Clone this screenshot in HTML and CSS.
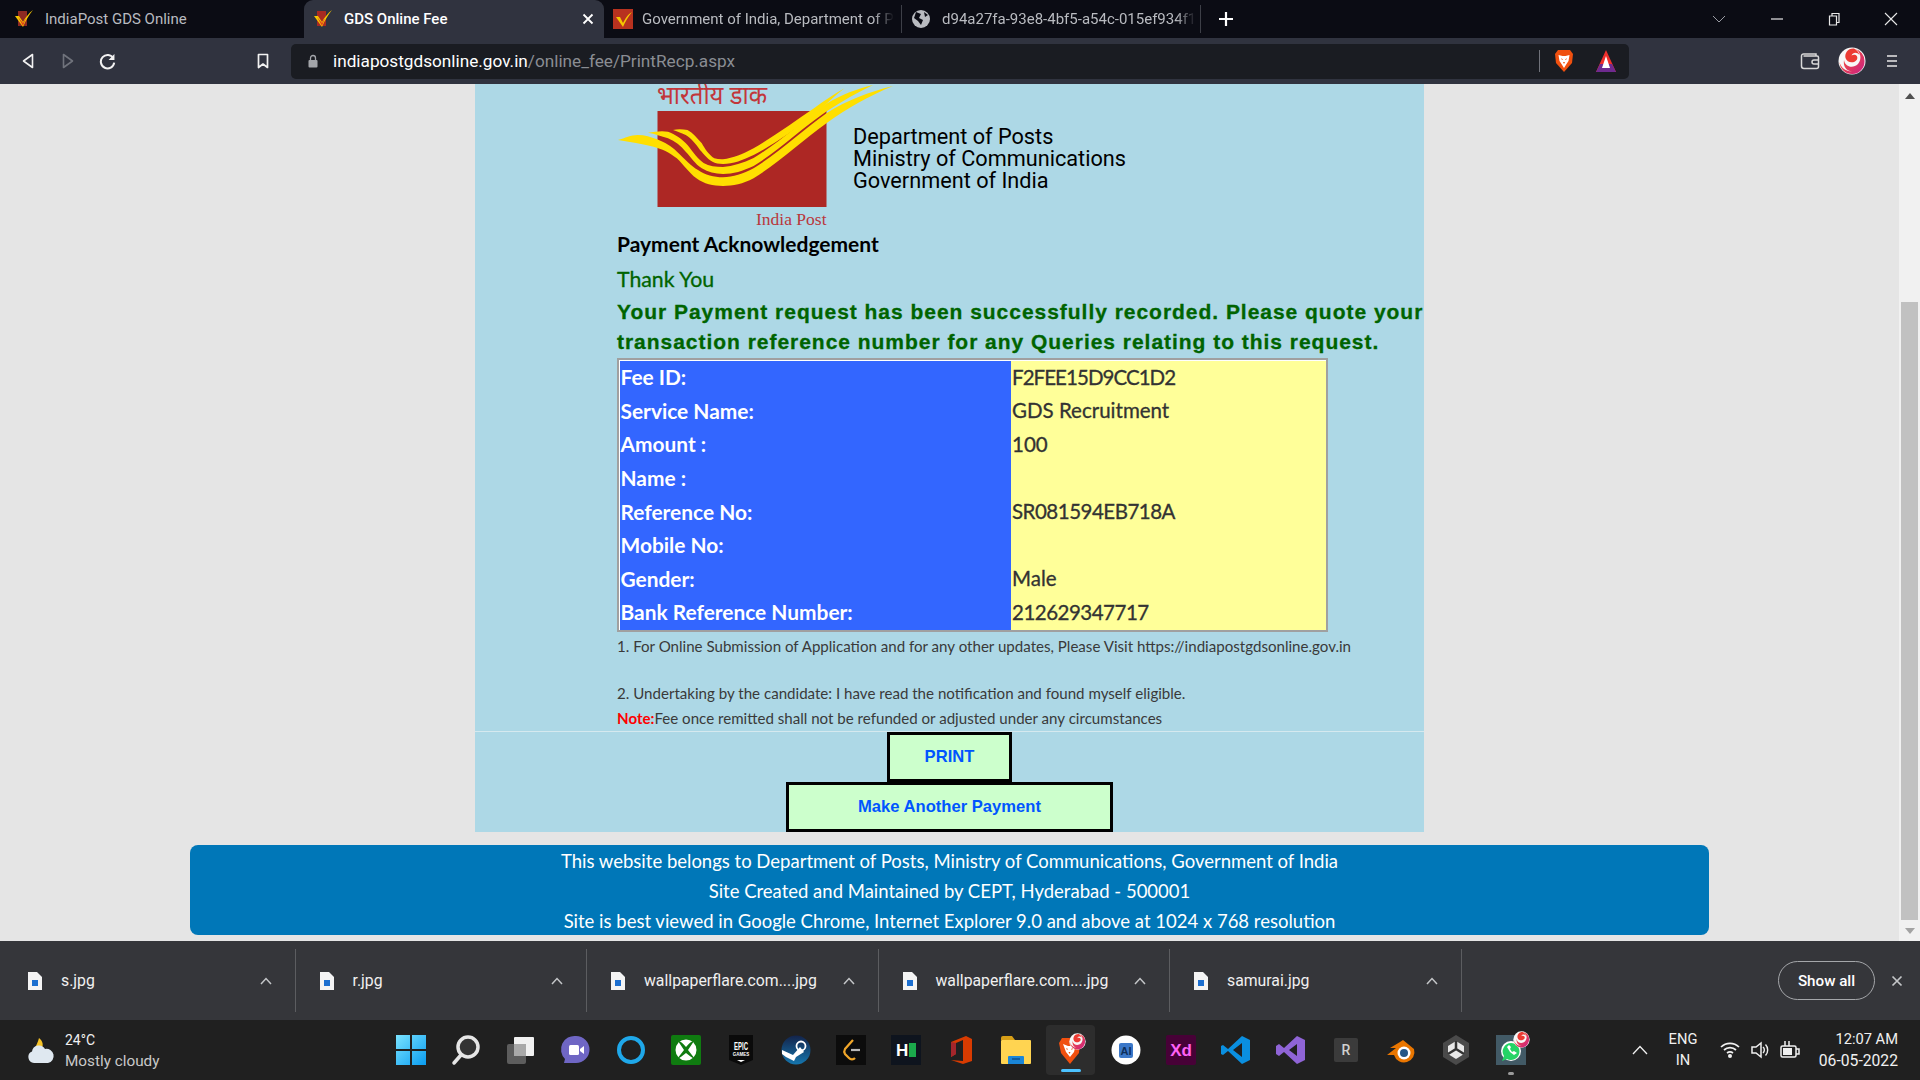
FILE: index.html
```html
<!DOCTYPE html>
<html lang="en">
<head>
<meta charset="utf-8">
<title>GDS Online Fee</title>
<link rel="stylesheet" href="styles.css">
</head>
<body>
<svg class="defs" width="0" height="0">
  <defs>
    <linearGradient id="lolly" x1="0" y1="0" x2="1" y2="1"><stop offset="0" stop-color="#ff5a22"/><stop offset="1" stop-color="#c9208a"/></linearGradient>
    <symbol id="lollipop" viewBox="0 0 28 28">
      <circle cx="14" cy="14" r="13.500" fill="#f7f7f7"/>
      <path d="M1.500 15 A12.500 12.500 0 0 0 26.500 14 A12.500 12.500 0 0 0 17 1.800 C23 5 24 12 20 17 C15 22 7 20 6 13 C5 19 8 24 14 24.500 C8 24.500 3 21 1.500 15 Z" fill="url(#lolly)"/>
      <path d="M16 1.500 C10 1 6.500 6 7.500 11 C9 16 16 17 19 12.500 C20.500 9 17 6.500 13.500 8.500 C15 5 19 5 21.500 8 C20.500 5 19 3 16 1.500 Z" fill="#ec3b33"/>
    </symbol>
  </defs>
</svg>
<div class="tabstrip">
  <div class="tab tab-1">
    <svg class="favicon" viewBox="0 0 20 20"><rect x="4" y="2" width="9" height="15" fill="#8e2a22"/><path d="M1 7 L5 7 L9 13 C11 9 15 4 19 1 C15 6 12 11 9 18 Z" fill="#f6c700"/><path d="M4 8 L9 14 L12 9 L9 17 Z" fill="#e2401c"/></svg>
    <span class="tab-title">IndiaPost GDS Online</span>
  </div>
  <div class="tab tab-active">
    <svg class="favicon" viewBox="0 0 20 20"><rect x="4" y="2" width="9" height="15" fill="#a82a22"/><path d="M1 7 L5 7 L9 13 C11 9 15 4 19 1 C15 6 12 11 9 18 Z" fill="#f6c700"/><path d="M4 8 L9 14 L12 9 L9 17 Z" fill="#e2401c"/></svg>
    <span class="tab-title">GDS Online Fee</span>
    <svg class="tab-close" viewBox="0 0 12 12"><path d="M1.500 1.500 L10.500 10.500 M10.500 1.500 L1.500 10.500" stroke="#fff" stroke-width="1.800"/></svg>
  </div>
  <div class="tab tab-3">
    <svg class="favicon" viewBox="0 0 20 20"><rect width="20" height="20" fill="#b8321f"/><path d="M3 8 L7 8 L10 14 C12 10 15 5 19 3 C15 8 12 13 10 18 Z" fill="#f6c700"/></svg>
    <span class="tab-title fade">Government of India, Department of P</span>
  </div>
  <div class="tab tab-4">
    <svg class="favicon" viewBox="0 0 20 20"><circle cx="10" cy="10" r="9" fill="#b9bbc0"/><path d="M5 3 L10 5 L8 9 L12 11 L10 16 L7 12 L3 9 Z M13 3 L17 6 L14 8 Z" fill="#0b0c14"/></svg>
    <span class="tab-title fade">d94a27fa-93e8-4bf5-a54c-015ef934f1</span>
  </div>
  <svg class="newtab" viewBox="0 0 16 16"><path d="M8 1 V15 M1 8 H15" stroke="#fff" stroke-width="2.200"/></svg>
  <svg class="win-chevron" viewBox="0 0 14 8"><path d="M1 1 L7 7 L13 1" fill="none" stroke="#9a9ca3" stroke-width="1"/></svg>
  <div class="win-controls">
    <svg viewBox="0 0 14 14" class="win-btn"><path d="M1 7 H13" stroke="#e8e8e8" stroke-width="1.200"/></svg>
    <svg viewBox="0 0 14 14" class="win-btn"><path d="M2.500 4 H9.500 V13 H2.500 Z M5 4 V1.500 H12 V10.500 H9.500" fill="none" stroke="#e8e8e8" stroke-width="1.200"/></svg>
    <svg viewBox="0 0 14 14" class="win-btn"><path d="M1 1 L13 13 M13 1 L1 13" stroke="#e8e8e8" stroke-width="1.100"/></svg>
  </div>
</div>

<div class="toolbar">
  <div class="nav-buttons">
    <svg class="nav-icon" viewBox="0 0 12 16"><path d="M10.500 1.500 V14.500 L1.500 8 Z" fill="none" stroke="#f2f2f2" stroke-width="1.600" stroke-linejoin="round"/></svg>
    <svg class="nav-icon" viewBox="0 0 12 16"><path d="M1.500 1.500 V14.500 L10.500 8 Z" fill="none" stroke="#70737c" stroke-width="1.600" stroke-linejoin="round"/></svg>
    <svg class="nav-icon" viewBox="0 0 16 16"><path d="M13.500 5 A6.300 6.300 0 1 0 14.300 9" fill="none" stroke="#f2f2f2" stroke-width="1.900"/><path d="M14.500 1 V6.500 H9 Z" fill="#f2f2f2"/></svg>
  </div>
  <svg class="bookmark" viewBox="0 0 12 16"><path d="M1.500 1.500 H10.500 V14.500 L6 11 L1.500 14.500 Z" fill="none" stroke="#f2f2f2" stroke-width="1.700" stroke-linejoin="round"/></svg>
  <div class="urlbar">
    <svg class="lock" viewBox="0 0 10 14"><path d="M2.500 6 V4 A2.500 2.500 0 0 1 7.500 4 V6" fill="none" stroke="#a3a5aa" stroke-width="1.300"/><rect x="0.500" y="6" width="9" height="7.500" rx="1" fill="#a3a5aa"/></svg>
    <span class="url"><span class="url-host">indiapostgdsonline.gov.in</span>/online_fee/PrintRecp.aspx</span>
    <span class="url-divider"></span>
    <svg class="shield" viewBox="0 0 20 24"><path d="M4 1 H16 L19 5 L18 14 L10 23 L2 14 L1 5 Z" fill="#f0500f"/><path d="M4.500 6 L8.500 7 H11.500 L15.500 6 L14.500 12 L12.500 15 L10 19 L7.500 15 L5.500 12 Z" fill="#fff"/><path d="M7 9 L9 10.500 L8 11 Z M13 9 L11 10.500 L12 11 Z M9 13 H11 L10 15 Z" fill="#f0500f"/></svg>
    <svg class="triangle" viewBox="0 0 22 24"><path d="M11 1 L21 23 H1 Z" fill="#ef2f2c"/><path d="M1 23 L5 15 H17 L21 23 Z" fill="#6e2a8f"/><path d="M11 7 L15 19 H7 Z" fill="#fff"/></svg>
  </div>
  <div class="toolbar-right">
    <svg class="wallet" viewBox="0 0 20 18"><path d="M16 4 V2 H3.500 A2 2 0 0 0 1.500 4 V14 A2.500 2.500 0 0 0 4 16.500 H16.500 A2 2 0 0 0 18.500 14.500 V5.500 A1.500 1.500 0 0 0 17 4 H3.500" fill="none" stroke="#d8d8d8" stroke-width="1.500"/><path d="M19 8 H14 A2 2 0 0 0 14 12 H19" fill="none" stroke="#d8d8d8" stroke-width="1.500"/></svg>
    <svg class="avatar"><use href="#lollipop"/></svg>
    <svg class="menu" viewBox="0 0 14 14"><path d="M2 2 H12 M2 7 H12 M2 12 H12" stroke="#e8e8e8" stroke-width="1.700"/></svg>
  </div>
</div>

<div class="viewport">
  <main class="page">
    <section class="panel">
      <div class="panel-inner">
        <header class="brand">
          <svg class="logo" viewBox="0 0 236 146">
            <text class="logo-hindi" x="40" y="20" textLength="110" lengthAdjust="spacingAndGlyphs">भारतीय डाक</text>
            <rect x="40.500" y="27" width="169" height="96" fill="#ad2724"/>
            <path d="M1 56 C8 54 14 51 20.500 51 C28 51 34 53 40 55.300 C48 58.500 54 62 60 67.700 C68 75 74 82 81 86 C88 91 97 93.300 106 93.300 C116 93 126 90 136.600 84.300 C160 70 185 47 209.400 29.300 C230 16 252 8 276 2 C252 12 230 24 209.400 39.300 C185 57 160 80 136.600 94.300 C126 100 116 102 106 102 C96 102 87 100 79.400 94.300 C72 89 67 81 59.800 74.300 C52 68 45 65 36.600 62.700 C25 60 13 58 1 56 Z" fill="#ffdf00"/>
            <path d="M31 48.700 C38 47.500 45 46.500 51 47.700 C58 50 65 55 70.500 61 C76 68 81 75 86.600 79 C92 82 99 83 106 83 C116 82 126 79 136.600 74 C160 60 185 38 209 20 C225 10 240 5 256 1 C240 9 225 17 209 27.700 C185 44 160 68 136.600 82 C126 87 116 90 106 90 C98 90 91 88 84.800 84.300 C78 80 74 73 68.700 67.700 C64 62 58 57 51 54.300 C44 52 38 50 31 48.700 Z" fill="#ffdf00"/>
            <path d="M56 46 C60 45 65 45 70.500 46 C76 49 80 54 84.800 59.300 C88 65 92 71 97.300 74.300 C100 75 103 75.500 106 75.300 C116 74 126 70 136.600 64.300 C158 52 178 37 197 24.300 C207 17 217 10 227.600 4.300 C218 11 208 22 197 31 C178 45 158 60 136.600 71 C126 76 116 80 106 80 C102 80 98 79 95.500 77.700 C90 75 87 70 83 66 C79 60 74 54 68.700 51 C64 49 60 47 56 46 Z" fill="#ffdf00"/>
            <text class="logo-post" x="139" y="141">India Post</text>
          </svg>
          <div class="dept">Department of Posts<br>Ministry of Communications<br>Government of India</div>
        </header>
        <h1 class="ack">Payment Acknowledgement</h1>
        <p class="thanks">Thank You</p>
        <p class="recorded">Your Payment request has been successfully recorded. Please quote your<br>transaction reference number for any Queries relating to this request.</p>
        <table class="fee-table">
          <tr><th>Fee ID:</th><td class="fee-code">F2FEE15D9CC1D2</td></tr>
          <tr><th>Service Name:</th><td>GDS Recruitment</td></tr>
          <tr><th>Amount :</th><td>100</td></tr>
          <tr><th>Name :</th><td></td></tr>
          <tr><th>Reference No:</th><td class="ref-code">SR081594EB718A</td></tr>
          <tr><th>Mobile No:</th><td></td></tr>
          <tr><th>Gender:</th><td>Male</td></tr>
          <tr><th>Bank Reference Number:</th><td class="ref-code">212629347717</td></tr>
        </table>
        <div class="notes">
          <p class="note-line note-first">1. For Online Submission of Application and for any other updates, Please Visit https://indiapostgdsonline.gov.in</p>
          <p class="note-line note-second">2. Undertaking by the candidate: I have read the notification and found myself eligible.</p>
          <p class="note-line note-third"><span class="note-label">Note:</span>Fee once remitted shall not be refunded or adjusted under any circumstances</p>
        </div>
      </div>
      <hr class="rule">
      <div class="actions">
        <button class="btn btn-print">PRINT</button>
        <button class="btn btn-again">Make Another Payment</button>
      </div>
    </section>
    <footer class="site-footer">
      <div>This website belongs to Department of Posts, Ministry of Communications, Government of India</div>
      <div>Site Created and Maintained by CEPT, Hyderabad - 500001</div>
      <div>Site is best viewed in Google Chrome, Internet Explorer 9.0 and above at 1024 x 768 resolution</div>
    </footer>
  </main>
  <div class="scrollbar">
    <svg class="scroll-arrow" viewBox="0 0 10 6"><path d="M0 6 L5 0 L10 6 Z" fill="#505050"/></svg>
    <div class="scroll-thumb"></div>
    <svg class="scroll-arrow scroll-arrow-down" viewBox="0 0 10 6"><path d="M0 0 L5 6 L10 0 Z" fill="#a3a3a3"/></svg>
  </div>
</div>

<div class="shelf">
  <div class="shelf-item">
    <svg class="file" viewBox="0 0 14 18"><path d="M0 0 H9 L14 5 V18 H0 Z" fill="#f4f4f4"/><rect x="4" y="8" width="6" height="6" fill="#1c6fd0"/></svg>
    <span class="file-name">s.jpg</span>
    <svg class="caret" viewBox="0 0 12 8"><path d="M1 7 L6 1.500 L11 7" fill="none" stroke="#c4c6c8" stroke-width="1.500"/></svg>
  </div>
  <div class="shelf-item">
    <svg class="file" viewBox="0 0 14 18"><path d="M0 0 H9 L14 5 V18 H0 Z" fill="#f4f4f4"/><rect x="4" y="8" width="6" height="6" fill="#1c6fd0"/></svg>
    <span class="file-name">r.jpg</span>
    <svg class="caret" viewBox="0 0 12 8"><path d="M1 7 L6 1.500 L11 7" fill="none" stroke="#c4c6c8" stroke-width="1.500"/></svg>
  </div>
  <div class="shelf-item">
    <svg class="file" viewBox="0 0 14 18"><path d="M0 0 H9 L14 5 V18 H0 Z" fill="#f4f4f4"/><rect x="4" y="8" width="6" height="6" fill="#1c6fd0"/></svg>
    <span class="file-name">wallpaperflare.com....jpg</span>
    <svg class="caret" viewBox="0 0 12 8"><path d="M1 7 L6 1.500 L11 7" fill="none" stroke="#c4c6c8" stroke-width="1.500"/></svg>
  </div>
  <div class="shelf-item">
    <svg class="file" viewBox="0 0 14 18"><path d="M0 0 H9 L14 5 V18 H0 Z" fill="#f4f4f4"/><rect x="4" y="8" width="6" height="6" fill="#1c6fd0"/></svg>
    <span class="file-name">wallpaperflare.com....jpg</span>
    <svg class="caret" viewBox="0 0 12 8"><path d="M1 7 L6 1.500 L11 7" fill="none" stroke="#c4c6c8" stroke-width="1.500"/></svg>
  </div>
  <div class="shelf-item">
    <svg class="file" viewBox="0 0 14 18"><path d="M0 0 H9 L14 5 V18 H0 Z" fill="#f4f4f4"/><rect x="4" y="8" width="6" height="6" fill="#1c6fd0"/></svg>
    <span class="file-name">samurai.jpg</span>
    <svg class="caret" viewBox="0 0 12 8"><path d="M1 7 L6 1.500 L11 7" fill="none" stroke="#c4c6c8" stroke-width="1.500"/></svg>
  </div>
  <div class="shelf-end">
    <span class="show-all">Show all</span>
    <svg class="shelf-close" viewBox="0 0 12 12"><path d="M1.500 1.500 L10.500 10.500 M10.500 1.500 L1.500 10.500" stroke="#c4c6c8" stroke-width="1.700"/></svg>
  </div>
</div>

<div class="taskbar">
  <div class="weather">
    <svg class="weather-icon" viewBox="0 0 28 26"><path d="M12 0 C16 3 17 8 14 11 L7 12 C9 8 11 4 12 0 Z" fill="#f7c327"/><path d="M7 25 A6 6 0 0 1 5 13.500 A7 7 0 0 1 18 11 A6.500 6.500 0 0 1 21 25 Z" fill="#dfe8f0"/></svg>
    <div class="weather-text"><span class="temp">24°C</span><span class="sky">Mostly cloudy</span></div>
  </div>
  <div class="apps">
    <div class="app"><svg class="app-icon" viewBox="0 0 30 30"><defs><linearGradient id="win" x1="0" y1="0" x2="1" y2="1"><stop offset="0" stop-color="#7ae3ff"/><stop offset="1" stop-color="#0a9cf0"/></linearGradient></defs><path d="M0 0 H14 V14 H0 Z M16 0 H30 V14 H16 Z M0 16 H14 V30 H0 Z M16 16 H30 V30 H16 Z" fill="url(#win)"/></svg></div>
    <div class="app"><svg class="app-icon" viewBox="0 0 30 30"><circle cx="17" cy="12" r="10" fill="#333" stroke="#e6e6e6" stroke-width="3.500"/><path d="M10 20 L3 28" stroke="#e6e6e6" stroke-width="3.500" stroke-linecap="round"/></svg></div>
    <div class="app"><svg class="app-icon" viewBox="0 0 30 30"><rect x="1" y="9" width="19" height="20" rx="2" fill="#5d5d5d"/><rect x="8" y="2" width="20" height="19" rx="1" fill="#f1f1f1"/><rect x="8" y="9" width="12" height="12" fill="#a9a9a9"/></svg></div>
    <div class="app"><svg class="app-icon" viewBox="0 0 30 30"><path d="M15 1 A13.500 13.500 0 0 1 15 28 H3 L4 24 A13.500 13.500 0 0 1 15 1 Z" fill="#6f66c4"/><rect x="8" y="10" width="10" height="10" rx="1.500" fill="#fff"/><path d="M19 14 L23 11 V19 L19 16 Z" fill="#fff"/></svg></div>
    <div class="app"><svg class="app-icon" viewBox="0 0 30 30"><circle cx="15" cy="15" r="12" fill="none" stroke="#1fa8ea" stroke-width="4"/></svg></div>
    <div class="app"><svg class="app-icon" viewBox="0 0 30 30"><rect width="30" height="30" rx="2" fill="#0f7b10"/><circle cx="15" cy="15" r="10.500" fill="#fff"/><path d="M15 12 C12 8 9 6 7 6 L13 15 L6 24 C9 23 12 20 15 18 C18 20 21 23 24 24 L17 15 L23 6 C21 6 18 8 15 12 Z" fill="#0f7b10"/></svg></div>
    <div class="app"><svg class="app-icon" viewBox="0 0 30 30"><path d="M3 0 H27 V25 L15 30 L3 25 Z" fill="#0a0a0a"/><text class="epic-top" x="8" y="15" textLength="14" lengthAdjust="spacingAndGlyphs">EPIC</text><text class="epic-bottom" x="15" y="21" text-anchor="middle">GAMES</text><path d="M11 25 H19 L15 27 Z" fill="#fff"/></svg></div>
    <div class="app"><svg class="app-icon" viewBox="0 0 30 30"><defs><linearGradient id="steam" x1="0" y1="0" x2="0" y2="1"><stop offset="0" stop-color="#13234a"/><stop offset="1" stop-color="#1576ae"/></linearGradient></defs><circle cx="15" cy="15" r="14.500" fill="url(#steam)"/><path d="M1 15 L12 20 L19 12 L23 17 L15 22 L13 26 L5 22 L1 19 Z" fill="#fff"/><circle cx="20" cy="11" r="4.500" fill="none" stroke="#fff" stroke-width="1.800"/></svg></div>
    <div class="app"><svg class="app-icon" viewBox="0 0 30 30"><rect width="30" height="30" fill="#0c0c0c"/><path d="M17 5 L9 14 A5 5 0 0 0 9 19 L13 23 A4 4 0 0 0 19 23" fill="none" stroke="#f0a62a" stroke-width="2.200"/><path d="M15 15 H24" stroke="#b8b8b8" stroke-width="2.200"/></svg></div>
    <div class="app"><svg class="app-icon" viewBox="0 0 30 30"><rect width="30" height="30" fill="#0e141e"/><text class="hr-h" x="5" y="21">H</text><rect x="18" y="8" width="7" height="14" fill="#1ba94c"/></svg></div>
    <div class="app"><svg class="app-icon" viewBox="0 0 30 30"><path d="M20 1 L26 4 V26 L17 29 L5 25 L17 26 V5 L10 8 V19 L5 22 V7 Z" fill="#d83b01"/><path d="M5 7 L10 8 V19 L5 22 Z" fill="#a4262c"/></svg></div>
    <div class="app"><svg class="app-icon" viewBox="0 0 30 30"><path d="M0 3 A2 2 0 0 1 2 1 H11 L14 5 H0 Z" fill="#d79f17"/><rect y="5" width="30" height="24" rx="1" fill="#ffd451"/><path d="M8 21 H22 A1 1 0 0 1 23 22 V29 H7 V22 A1 1 0 0 1 8 21 Z" fill="#1a86d8"/><path d="M11 24 H19" stroke="#0f4e8c" stroke-width="1.500"/></svg></div>
    <div class="app app-active"><svg class="app-icon" viewBox="0 0 30 30"><path d="M6 3 H18 L24 7 L23 18 L14 29 L5 18 L3 8 Z" fill="#f0500f"/><path d="M7 9 L12 11 H15 L20 9 L18 17 L14 22 L10 17 Z" fill="#fff"/><path d="M10 13 L12 14 L11 15 Z M17 13 L15 14 L16 15 Z M12.500 17 H14.500 L13.500 19 Z" fill="#f0500f"/><use href="#lollipop" x="13" y="-2" width="17" height="17"/></svg><span class="app-underline"></span></div>
    <div class="app"><svg class="app-icon" viewBox="0 0 30 30"><circle cx="15" cy="15" r="14.500" fill="#fff"/><rect x="8" y="8" width="14" height="15" rx="2" fill="#3c78c8"/><text class="arc-ai" x="15" y="20" text-anchor="middle">AI</text></svg></div>
    <div class="app"><svg class="app-icon" viewBox="0 0 30 30"><rect width="30" height="30" rx="2" fill="#470137"/><text class="xd" x="15" y="21" text-anchor="middle">Xd</text></svg></div>
    <div class="app"><svg class="app-icon" viewBox="0 0 30 30"><path d="M21 1 L29 5 V25 L21 29 L7 16 L2 20 L0 19 V11 L2 10 L7 14 Z M21 8 L12 15 L21 22 Z" fill="#0a8fe0"/></svg></div>
    <div class="app"><svg class="app-icon" viewBox="0 0 30 30"><path d="M21 1 L29 5 V25 L21 29 L8 17 L3 21 L0 19 V11 L3 9 L8 13 Z M21 9 L13 15 L21 21 Z" fill="#8f64d6"/></svg></div>
    <div class="app"><svg class="app-icon app-icon-small" viewBox="0 0 24 24"><rect width="24" height="24" rx="2" fill="#3b3b3b"/><text class="r-mark" x="12" y="17" text-anchor="middle">R</text></svg></div>
    <div class="app"><svg class="app-icon" viewBox="0 0 30 30"><path d="M17 5 L28 14 A10 10 0 1 1 8 20 L1 20 L10 13 L4 13 L14 7 Z" fill="#ea7600"/><circle cx="18" cy="18" r="6.500" fill="#fff"/><circle cx="18" cy="18" r="4" fill="#265787"/></svg></div>
    <div class="app"><svg class="app-icon" viewBox="0 0 30 30"><path d="M15 0 L28 8 V22 L15 30 L2 22 V8 Z" fill="#4a4a4a"/><path d="M15 6 L23 11 V19 L15 24 L7 19 V11 Z" fill="#e8e8e8"/><path d="M15 6 V14 L7 19 M15 14 L23 19" stroke="#333" stroke-width="2.500" fill="none"/></svg></div>
    <div class="app"><svg class="app-icon" viewBox="0 0 30 30"><rect width="30" height="30" fill="#425a66"/><circle cx="15" cy="16" r="10" fill="#fff"/><path d="M15 8 A8.500 8.500 0 0 0 8 21 L6 26 L11 24 A8.500 8.500 0 1 0 15 8 Z" fill="#25d366"/><path d="M11 12 L14 17 L18 20 L21 18 L18 16 L16 17 L14 14 L15 12 L13 10 Z" fill="#fff"/><use href="#lollipop" x="17" y="-4" width="17" height="17"/></svg><span class="app-dot"></span></div>
  </div>
  <div class="tray">
    <svg class="tray-caret" viewBox="0 0 16 10"><path d="M1 9 L8 1.500 L15 9" fill="none" stroke="#f0f0f0" stroke-width="1.300"/></svg>
    <div class="lang"><span>ENG</span><span>IN</span></div>
    <svg class="tray-icon" viewBox="0 0 20 20"><path d="M1 7 A13 13 0 0 1 19 7 M4 10 A9 9 0 0 1 16 10 M7 13 A5 5 0 0 1 13 13" fill="none" stroke="#f0f0f0" stroke-width="1.700"/><circle cx="10" cy="16" r="2" fill="#f0f0f0"/></svg>
    <svg class="tray-icon" viewBox="0 0 20 20"><path d="M2 7 H6 L11 3 V17 L6 13 H2 Z" fill="none" stroke="#f0f0f0" stroke-width="1.500"/><path d="M13 7 A4 4 0 0 1 13 13 M15.500 4.500 A8 8 0 0 1 15.500 15.500" fill="none" stroke="#f0f0f0" stroke-width="1.400"/></svg>
    <svg class="tray-icon" viewBox="0 0 20 20"><rect x="1" y="6" width="15" height="11" rx="1.500" fill="none" stroke="#f0f0f0" stroke-width="1.500"/><rect x="3" y="8" width="9" height="7" fill="#f0f0f0"/><path d="M16 9 H19 V14 H16 M5 1 V6 M9 1 V6" stroke="#f0f0f0" stroke-width="1.500" fill="none"/></svg>
    <div class="clock"><span>12:07 AM</span><span class="date">06-05-2022</span></div>
  </div>
</div>
</body>
</html>
```

FILE: styles.css
```css
* { box-sizing: border-box; }
html, body { margin: 0; height: 100%; }
body {
  width: 1920px;
  height: 1080px;
  overflow: hidden;
  display: flex;
  flex-direction: column;
  font-family: "Lato", "Noto Sans", sans-serif;
  background: #e5e5e5;
}
.defs { display: block; flex: none; }

/* tab strip */
.tabstrip {
  height: 38px;
  flex: none;
  display: flex;
  align-items: stretch;
  background: #0b0c14;
  color: #b9bbc0;
  font-family: "Roboto", sans-serif;
  font-size: 15px;
}
.tab { display: flex; align-items: center; flex: none; white-space: nowrap; }
.tab-1 { width: 304px; padding-left: 14px; gap: 11px; }
.tab-active {
  width: 300px;
  padding: 0 10px 0 9px;
  gap: 11px;
  background: #30333f;
  border-radius: 9px 9px 0 0;
  color: #fff;
  font-weight: 500;
}
.tab-active .tab-title { flex: 1; }
.tab-3 { width: 298px; height: 28px; align-self: center; padding: 0 0 0 9px; gap: 9px; border-right: 1px solid #3d3f47; }
.tab-4 { width: 299px; height: 28px; align-self: center; padding: 0 0 0 9px; gap: 11px; border-right: 1px solid #3d3f47; }
.fade {
  -webkit-mask-image: linear-gradient(to right, #000 92%, transparent 100%);
  mask-image: linear-gradient(to right, #000 92%, transparent 100%);
}
.favicon { width: 20px; height: 20px; flex: none; }
.tab-close { width: 12px; height: 12px; flex: none; }
.newtab { width: 16px; height: 16px; margin: 11px 0 0 17px; flex: none; }
.win-chevron { width: 14px; height: 8px; margin: 15px 0 0 478px; flex: none; }
.win-controls { display: flex; gap: 43px; margin-left: 44px; align-items: center; }
.win-btn { width: 14px; height: 14px; }

/* toolbar */
.toolbar {
  height: 46px;
  flex: none;
  background: #30333f;
  display: flex;
  align-items: center;
}
.nav-buttons { display: flex; align-items: center; gap: 28px; margin-left: 22px; }
.nav-icon { width: 12px; height: 16px; }
.nav-icon:last-child { width: 17px; height: 17px; margin-left: -3px; }
.bookmark { width: 12px; height: 16px; margin-left: 141px; flex: none; }
.urlbar {
  width: 1338px;
  height: 35px;
  margin-left: 22px;
  flex: none;
  border-radius: 5px;
  background: #1a1c22;
  display: flex;
  align-items: center;
  padding-left: 17px;
}
.lock { width: 10px; height: 14px; flex: none; }
.url { margin-left: 15px; font-family: "Roboto", sans-serif; font-size: 17.200px; color: #8a8d93; width: 1206px; white-space: nowrap; flex: none; }
.url-host { color: #fff; }
.url-divider { width: 1px; height: 22px; background: #70727a; flex: none; }
.shield { width: 20px; height: 24px; margin-left: 14px; flex: none; }
.triangle { width: 22px; height: 24px; margin-left: 21px; flex: none; }
.toolbar-right { display: flex; align-items: center; margin-left: 171px; }
.wallet { width: 20px; height: 18px; }
.avatar { width: 28px; height: 28px; margin-left: 18px; }
.menu { width: 14px; height: 14px; margin-left: 19px; }

/* page */
.viewport { flex: 1; display: flex; min-height: 0; }
.page { flex: 1; min-width: 0; overflow: hidden; }
.panel { width: 949px; height: 748px; margin: 0 auto; background: #add8e6; }
.panel-inner { padding-left: 142px; }
.brand { height: 146px; display: flex; overflow: visible; }
.logo { width: 236px; height: 146px; flex: none; overflow: visible; }
.logo-hindi { font-family: "Noto Sans", "Noto Sans CJK SC", sans-serif; font-size: 25px; fill: #c2363a; }
.logo-post { font-family: "Liberation Serif", serif; font-size: 17.500px; fill: #b9373c; }
.dept {
  padding-top: 42px;
  font-family: "Roboto", sans-serif;
  font-size: 21.700px;
  line-height: 22px;
  color: #000;
}
.ack { margin: -1px 0 0; font-size: 21px; line-height: 30px; font-weight: 700; color: #000; }
.thanks { margin: 5px 0 0; font-size: 21.300px; line-height: 30px; color: #006400; -webkit-text-stroke: 0.3px #006400; }
.recorded {
  margin: 3px 0 0;
  font-family: "Liberation Sans", sans-serif;
  font-size: 21px;
  line-height: 30px;
  font-weight: 700;
  letter-spacing: 0.97px;
  color: #006400;
  white-space: nowrap;
  -webkit-text-stroke: 0.3px #006400;
}
.fee-table {
  width: 711px;
  margin-top: 1px;
  border: 2px solid #a0a0a0;
  border-spacing: 0;
  padding: 1px 0 0 1px;
  background: #fff;
}
.fee-table th {
  width: 391px;
  height: 33.600px;
  padding: 0 0 2px 0.500px;
  background: #3366ff;
  color: #fff;
  text-align: left;
  font-size: 20.900px;
  font-weight: 700;
}
.fee-table td {
  height: 33.600px;
  padding: 0 0 2px 1px;
  background: #ffff99;
  color: #333;
  font-size: 20.500px;
  -webkit-text-stroke: 0.3px #333;
}
.fee-table .fee-code { letter-spacing: -0.95px; }
.fee-table .ref-code { letter-spacing: -0.5px; }
.notes { font-size: 15.100px; color: #3a3a3a; }
.note-line { margin: 0; line-height: 20px; white-space: nowrap; }
.note-first { margin-top: 4px; }
.note-second { margin-top: 27px; }
.note-third { margin-top: 5px; }
.note-label { color: #ff0000; font-weight: 700; }
.rule { margin: 3px 0 0; border: 0; height: 1px; background: #d5e9ef; }
.actions { display: flex; flex-direction: column; align-items: center; }
.btn {
  display: block;
  margin: 0 auto;
  height: 50px;
  background: #ccffcc;
  border: 3px solid #000;
  font-family: "Liberation Sans", sans-serif;
  font-size: 16.600px;
  font-weight: 700;
  color: #0055ff;
  padding: 0;
}
.btn-print { width: 125px; }
.btn-again { width: 327px; }
.site-footer {
  width: 1519px;
  height: 90px;
  margin: 13px auto 0;
  padding-top: 1px;
  background: #0077b8;
  border-radius: 8px;
  color: #fff;
  font-size: 18.500px;
  line-height: 30px;
  text-align: center;
}
.scrollbar {
  width: 21px;
  flex: none;
  background: #f1f1f1;
  display: flex;
  flex-direction: column;
  align-items: center;
  padding: 9px 0 6px;
}
.scroll-arrow { width: 10px; height: 6px; flex: none; }
.scroll-thumb { width: 17px; height: 618px; background: #c1c1c1; margin: 203px 0 5px; flex: none; }
.scroll-arrow-down { margin-top: 3px; }

/* download shelf */
.shelf {
  height: 79px;
  flex: none;
  background: #35363a;
  display: flex;
  align-items: center;
  color: #f0f0f0;
  font-family: "Roboto", sans-serif;
}
.shelf-item {
  width: 291.500px;
  height: 63px;
  flex: none;
  display: flex;
  align-items: center;
  border-right: 1px solid #5c5d60;
  padding: 0 23px 0 24px;
}
.shelf-item:first-child { width: 295.500px; padding-left: 28px; }
.file { width: 14px; height: 18px; flex: none; }
.file-name { margin-left: 19px; flex: 1; white-space: nowrap; font-size: 15.800px; }
.caret { width: 12px; height: 8px; flex: none; }
.shelf-end { flex: 1; display: flex; align-items: center; justify-content: flex-end; padding-right: 17px; }
.show-all {
  width: 97px;
  height: 39px;
  border: 1px solid #a5a7aa;
  border-radius: 20px;
  display: flex;
  align-items: center;
  justify-content: center;
  font-size: 15.200px;
  font-weight: 500;
  color: #fff;
}
.shelf-close { width: 12px; height: 12px; margin-left: 16px; }

/* taskbar */
.taskbar {
  height: 60px;
  flex: none;
  background: #202020;
  display: flex;
  align-items: center;
  color: #f0f0f0;
  font-family: "Roboto", sans-serif;
  font-size: 14.700px;
}
.weather { width: 383px; flex: none; display: flex; align-items: center; padding: 1px 0 0 27px; gap: 10px; }
.weather-icon { width: 28px; height: 26px; flex: none; }
.weather-text { display: flex; flex-direction: column; line-height: 21px; }
.temp { font-size: 14px; }
.sky { color: #c9c9c9; font-size: 15.300px; }
.apps { display: flex; width: 1155px; flex: none; }
.app {
  width: 55px;
  height: 50px;
  flex: none;
  position: relative;
  display: flex;
  align-items: center;
  justify-content: center;
}
.app-active { background: #2d2d2d; border-radius: 4px; width: 49px; margin: 0 3px; }
.app-icon { width: 30px; height: 30px; overflow: visible; }
.app-icon-small { width: 24px; height: 24px; }
.app-underline {
  position: absolute;
  left: 15px;
  bottom: 3px;
  width: 20px;
  height: 3px;
  border-radius: 2px;
  background: #4cc2ff;
}
.app-dot {
  position: absolute;
  left: 25px;
  bottom: 0;
  width: 6px;
  height: 3px;
  border-radius: 2px;
  background: #9a9a9a;
}
.epic-top { font: 700 11px "Liberation Sans", sans-serif; fill: #fff; }
.epic-bottom { font: 700 4.500px "Liberation Sans", sans-serif; fill: #fff; }
.hr-h { font: 700 17px "Liberation Sans", sans-serif; fill: #fff; }
.arc-ai { font: 700 11px "Liberation Sans", sans-serif; fill: #0e2f5a; }
.xd { font: 700 17px "Liberation Sans", sans-serif; fill: #ff61f6; }
.r-mark { font: 500 14px "Roboto", sans-serif; fill: #d0d0d0; }
.tray { flex: 1; display: flex; align-items: center; }
.tray-caret { width: 16px; height: 10px; margin-left: 94px; flex: none; }
.lang { width: 50px; margin-left: 10px; display: flex; flex-direction: column; align-items: center; line-height: 21px; }
.tray-icon { width: 20px; height: 20px; flex: none; margin-left: 10px; }
.lang + .tray-icon { margin-left: 12px; }
.clock { margin-left: auto; margin-right: 22px; display: flex; flex-direction: column; align-items: flex-end; line-height: 21px; }
.date { font-size: 15.700px; }
```
